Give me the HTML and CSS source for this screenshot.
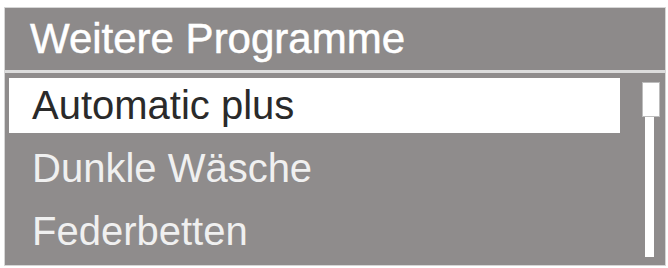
FILE: index.html
```html
<!DOCTYPE html>
<html lang="de">
<head>
<meta charset="utf-8">
<title>Weitere Programme</title>
<link rel="stylesheet" href="styles.css">
</head>
<body>
<div class="frame">
  <div class="header">Weitere Programme</div>
  <div class="sep"></div>
  <div class="body">
    <ul class="list">
      <li class="row selected">Automatic plus</li>
      <li class="row">Dunkle Wäsche</li>
      <li class="row">Federbetten</li>
    </ul>
    <div class="scroll">
      <div class="thumb"></div>
      <div class="track"></div>
    </div>
  </div>
</div>
</body>
</html>
```
FILE: styles.css
```css
html, body {
  margin: 0;
  padding: 0;
  background: #ffffff;
}
body {
  width: 668px;
  height: 268px;
  overflow: hidden;
}
.frame {
  margin: 8px 0 0 5px;
  width: 660px;
  height: 257px;
  background: #8f8c8c;
  display: flex;
  flex-direction: column;
  font-family: "Liberation Sans", Arial, sans-serif;
  box-shadow: 0 0 0 1px #d6d6d6;
}
.header {
  height: 62px;
  line-height: 62px;
  padding-left: 25px;
  font-size: 42px;
  color: #ffffff;
  -webkit-text-stroke: 0.5px #ffffff;
  background: #8d8a8a;
  white-space: nowrap;
}
.sep {
  height: 3px;
  background: #dcdcdc;
}
.body {
  flex: 1;
  display: flex;
}
.list {
  flex: 1;
  margin: 0;
  padding: 5px 0 0 4px;
  list-style: none;
  display: flex;
  flex-direction: column;
  gap: 8px;
}
.row {
  height: 55px;
  line-height: 55px;
  padding-left: 23px;
  font-size: 40px;
  color: #f0f0f0;
  white-space: nowrap;
}
.row.selected {
  background: #ffffff;
  color: #2a2a2a;
}
.scroll {
  width: 45px;
  padding-top: 9px;
  display: flex;
  flex-direction: column;
}
.thumb {
  margin-left: 22px;
  width: 16px;
  height: 33px;
  background: #ffffff;
  border: 1px solid #bdbdbd;
}
.track {
  margin-left: 25px;
  width: 9px;
  height: 140px;
  background: #ffffff;
}
```
